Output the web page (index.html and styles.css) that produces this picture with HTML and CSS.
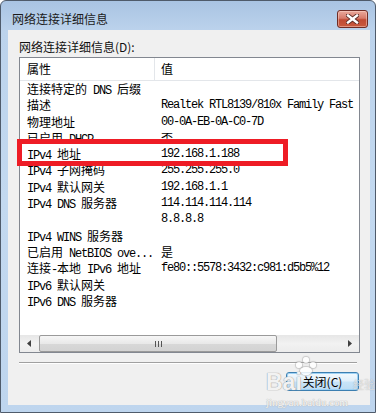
FILE: index.html
```html
<!DOCTYPE html>
<html lang="zh-CN">
<head>
<meta charset="utf-8">
<title>网络连接详细信息</title>
<link rel="stylesheet" href="styles.css">
</head>
<body>
<div class="window">
  <div class="titlebar">
    <span class="title">网络连接详细信息</span>
    <div class="close">
      <svg width="13" height="10" viewBox="0 0 13 10">
        <path d="M2 1.5 L11 8.5 M11 1.5 L2 8.5" stroke="#5a2a24" stroke-width="4.2" stroke-linecap="square"/>
        <path d="M2 1.5 L11 8.5 M11 1.5 L2 8.5" stroke="#ffffff" stroke-width="2.4" stroke-linecap="square"/>
      </svg>
    </div>
  </div>
  <div class="body">
    <div class="label">网络连接详细信息(D):</div>
    <div class="listbox">
      <div class="header">
        <div class="hcell c1">属性</div>
        <div class="hcell c2">值</div>
      </div>
      <div class="rows">
        <div class="k">连接特定的<span class="m"> DNS </span>后缀</div><div class="v"></div>
        <div class="k">描述</div><div class="v m">Realtek RTL8139/810x Family Fast</div>
        <div class="k">物理地址</div><div class="v m">00-0A-EB-0A-C0-7D</div>
        <div class="k">已启用<span class="m"> DHCP</span></div><div class="v">否</div>
        <div class="k"><span class="m">IPv4 </span>地址</div><div class="v m">192.168.1.188</div>
        <div class="k"><span class="m">IPv4 </span>子网掩码</div><div class="v m">255.255.255.0</div>
        <div class="k"><span class="m">IPv4 </span>默认网关</div><div class="v m">192.168.1.1</div>
        <div class="k"><span class="m">IPv4 DNS </span>服务器</div><div class="v m">114.114.114.114</div>
        <div class="k"></div><div class="v m">8.8.8.8</div>
        <div class="k"><span class="m">IPv4 WINS </span>服务器</div><div class="v"></div>
        <div class="k">已启用<span class="m"> NetBIOS ove...</span></div><div class="v">是</div>
        <div class="k">连接<span class="m">-</span>本地<span class="m"> IPv6 </span>地址</div><div class="v m">fe80::5578:3432:c981:d5b5%12</div>
        <div class="k"><span class="m">IPv6 </span>默认网关</div><div class="v"></div>
        <div class="k"><span class="m">IPv6 DNS </span>服务器</div><div class="v"></div>
      </div>
      <div class="hscroll">
        <div class="arrow">
          <svg width="4" height="7" viewBox="0 0 4 7"><path d="M4 0 L0 3.5 L4 7 Z" fill="#404040"/></svg>
        </div>
        <div class="track">
          <div class="thumb">
            <svg width="7" height="6" viewBox="0 0 7 6"><path d="M0.5 0 V6 M3.5 0 V6 M6.5 0 V6" stroke="#555" stroke-width="1"/></svg>
          </div>
        </div>
        <div class="arrow">
          <svg width="4" height="7" viewBox="0 0 4 7"><path d="M0 0 L4 3.5 L0 7 Z" fill="#404040"/></svg>
        </div>
      </div>
      <div class="highlight"></div>
    </div>
    <div class="sep"></div>
    <div class="footer">
      <div class="btn">关闭(C)</div>
    </div>
    <div class="watermark">
      <div class="paw">
        <span class="toe t1"></span><span class="toe t2"></span><span class="toe t3"></span><span class="pad"></span>
      </div>
      <div class="wm-bai">Bai</div>
      <div class="wm-jy">经验</div>
      <div class="wm-url">jingyan.baidu.com</div>
    </div>
  </div>
</div>
</body>
</html>
```

FILE: styles.css
```css
html, body {
  margin: 0;
  padding: 0;
  background: #ffffff;
}

body {
  font-family: "Noto Sans CJK SC", "Noto Sans", sans-serif;
  font-size: 12px;
  color: #000;
}

.window {
  width: 362px;
  height: 404px;
  border: 1px solid #4f5b6b;
  border-radius: 6px 6px 0 0;
  padding: 0 5px 7px 7px;
  background: linear-gradient(180deg, #a9c4e3 0px, #bcd3ec 30px, #c3d9f0 200px, #bed5ee 100%);
  display: flex;
  flex-direction: column;
}

.titlebar {
  height: 29px;
  display: flex;
  align-items: flex-start;
  justify-content: space-between;
  padding-top: 9px;
  box-sizing: border-box;
}

.title {
  margin-left: 4px;
  line-height: 18px;
  color: #1b1b1b;
}

.close {
  width: 31px;
  height: 18px;
  box-sizing: border-box;
  margin-right: 2px;
  border: 1px solid #6f2c25;
  border-radius: 3px;
  background: linear-gradient(180deg, #e9a99c 0%, #d77b6b 45%, #c04a33 55%, #c95a3e 100%);
  box-shadow: inset 0 0 0 1px rgba(255, 220, 210, 0.45);
  display: flex;
  align-items: center;
  justify-content: center;
}

.body {
  flex: 1;
  background: #f0f0f0;
  display: flex;
  flex-direction: column;
  padding: 9px 10px 14px 11px;
  position: relative;
}

.label {
  line-height: 16px;
  height: 16px;
  margin-bottom: 2px;
  color: #111;
}

.listbox {
  height: 294px;
  border: 1px solid #828790;
  background: #fff;
  display: flex;
  flex-direction: column;
  position: relative;
}

.header {
  height: 22px;
  border-bottom: 1px solid #e3e6ea;
  display: flex;
  flex-shrink: 0;
}

.hcell {
  line-height: 22px;
}

.hcell.c1 {
  width: 127px;
  padding-left: 7px;
  border-right: 1px solid #e3e6ea;
}

.hcell.c2 {
  padding-left: 6px;
}

.rows {
  flex: 1;
  display: grid;
  grid-template-columns: 135px 1fr;
  grid-auto-rows: 16.3px;
  align-content: start;
  overflow: hidden;
  white-space: nowrap;
  line-height: 16.3px;
}

.k {
  padding-left: 7px;
  overflow: hidden;
}

.v {
  padding-left: 6px;
  overflow: hidden;
}

.m {
  font-family: "Liberation Mono", monospace;
  letter-spacing: -1.2px;
}

.hscroll {
  height: 17px;
  flex-shrink: 0;
  display: flex;
  background: linear-gradient(180deg, #e6e6e6 0%, #f2f2f2 50%, #ececec 100%);
}

.arrow {
  width: 18px;
  display: flex;
  align-items: center;
  justify-content: center;
}

.track {
  flex: 1;
  display: flex;
  align-items: stretch;
  padding: 0 1px;
}

.thumb {
  width: 238px;
  box-sizing: border-box;
  border: 1px solid #9a9a9a;
  border-radius: 2px;
  background: linear-gradient(180deg, #f6f6f6 0%, #e9e9e9 50%, #d8d8d8 51%, #d3d3d3 100%);
  display: flex;
  align-items: center;
  justify-content: center;
}

.highlight {
  position: absolute;
  left: -3px;
  top: 81px;
  width: 261px;
  height: 17px;
  border: 5px solid #ee1c25;
}

.sep {
  margin: 9px 3px 0 0;
  border-top: 1px solid #a0a0a0;
  border-bottom: 1px solid #ffffff;
  height: 0;
}

.footer {
  display: flex;
  justify-content: flex-end;
  margin-top: 8px;
  padding-right: 1px;
}

.btn {
  width: 73px;
  height: 19px;
  box-sizing: border-box;
  border: 1px solid #3c7fb1;
  border-radius: 3px;
  background: linear-gradient(180deg, #f2f9fe 0%, #e1f0fb 45%, #c8e4f8 55%, #bcdcf4 100%);
  box-shadow: inset 0 0 0 1px #9ed2f5;
  text-align: center;
  line-height: 17px;
  color: #000;
}

.watermark {
  position: absolute;
  left: 250px;
  top: 326px;
  width: 120px;
  height: 50px;
  pointer-events: none;
}

.paw {
  position: absolute;
  left: 36px;
  top: 0;
  width: 24px;
  height: 18px;
}

.toe {
  position: absolute;
  width: 6px;
  height: 6px;
  border-radius: 50%;
  background: rgba(255, 255, 255, 0.85);
  box-shadow: 0 0 1px 1px rgba(150, 150, 150, 0.45);
}

.t1 { left: 2px; top: 6px; }
.t2 { left: 9px; top: 1px; }
.t3 { left: 16px; top: 6px; }

.pad {
  position: absolute;
  left: 6px;
  top: 11px;
  width: 12px;
  height: 8px;
  border-radius: 50%;
  background: rgba(255, 255, 255, 0.85);
  box-shadow: 0 0 1px 1px rgba(150, 150, 150, 0.45);
}

.wm-bai {
  position: absolute;
  left: 8px;
  top: 14px;
  font-family: "Liberation Sans", sans-serif;
  font-weight: bold;
  font-size: 23px;
  line-height: 24px;
  color: rgba(255, 255, 255, 0.9);
  text-shadow: 0 0 1px #9a9a9a, 0 0 1px #9a9a9a;
}

.wm-jy {
  position: absolute;
  left: 95px;
  top: 22px;
  font-size: 11px;
  line-height: 13px;
  color: rgba(255, 255, 255, 0.6);
  text-shadow: 0 0 1px rgba(120, 120, 120, 0.6);
}

.wm-url {
  position: absolute;
  left: 8px;
  top: 40px;
  font-family: "Liberation Serif", serif;
  font-size: 11px;
  line-height: 12px;
  color: rgba(255, 255, 255, 0.9);
  text-shadow: 0 0 1px #b0b0b0, 0 0 1px #b0b0b0;
}
```
